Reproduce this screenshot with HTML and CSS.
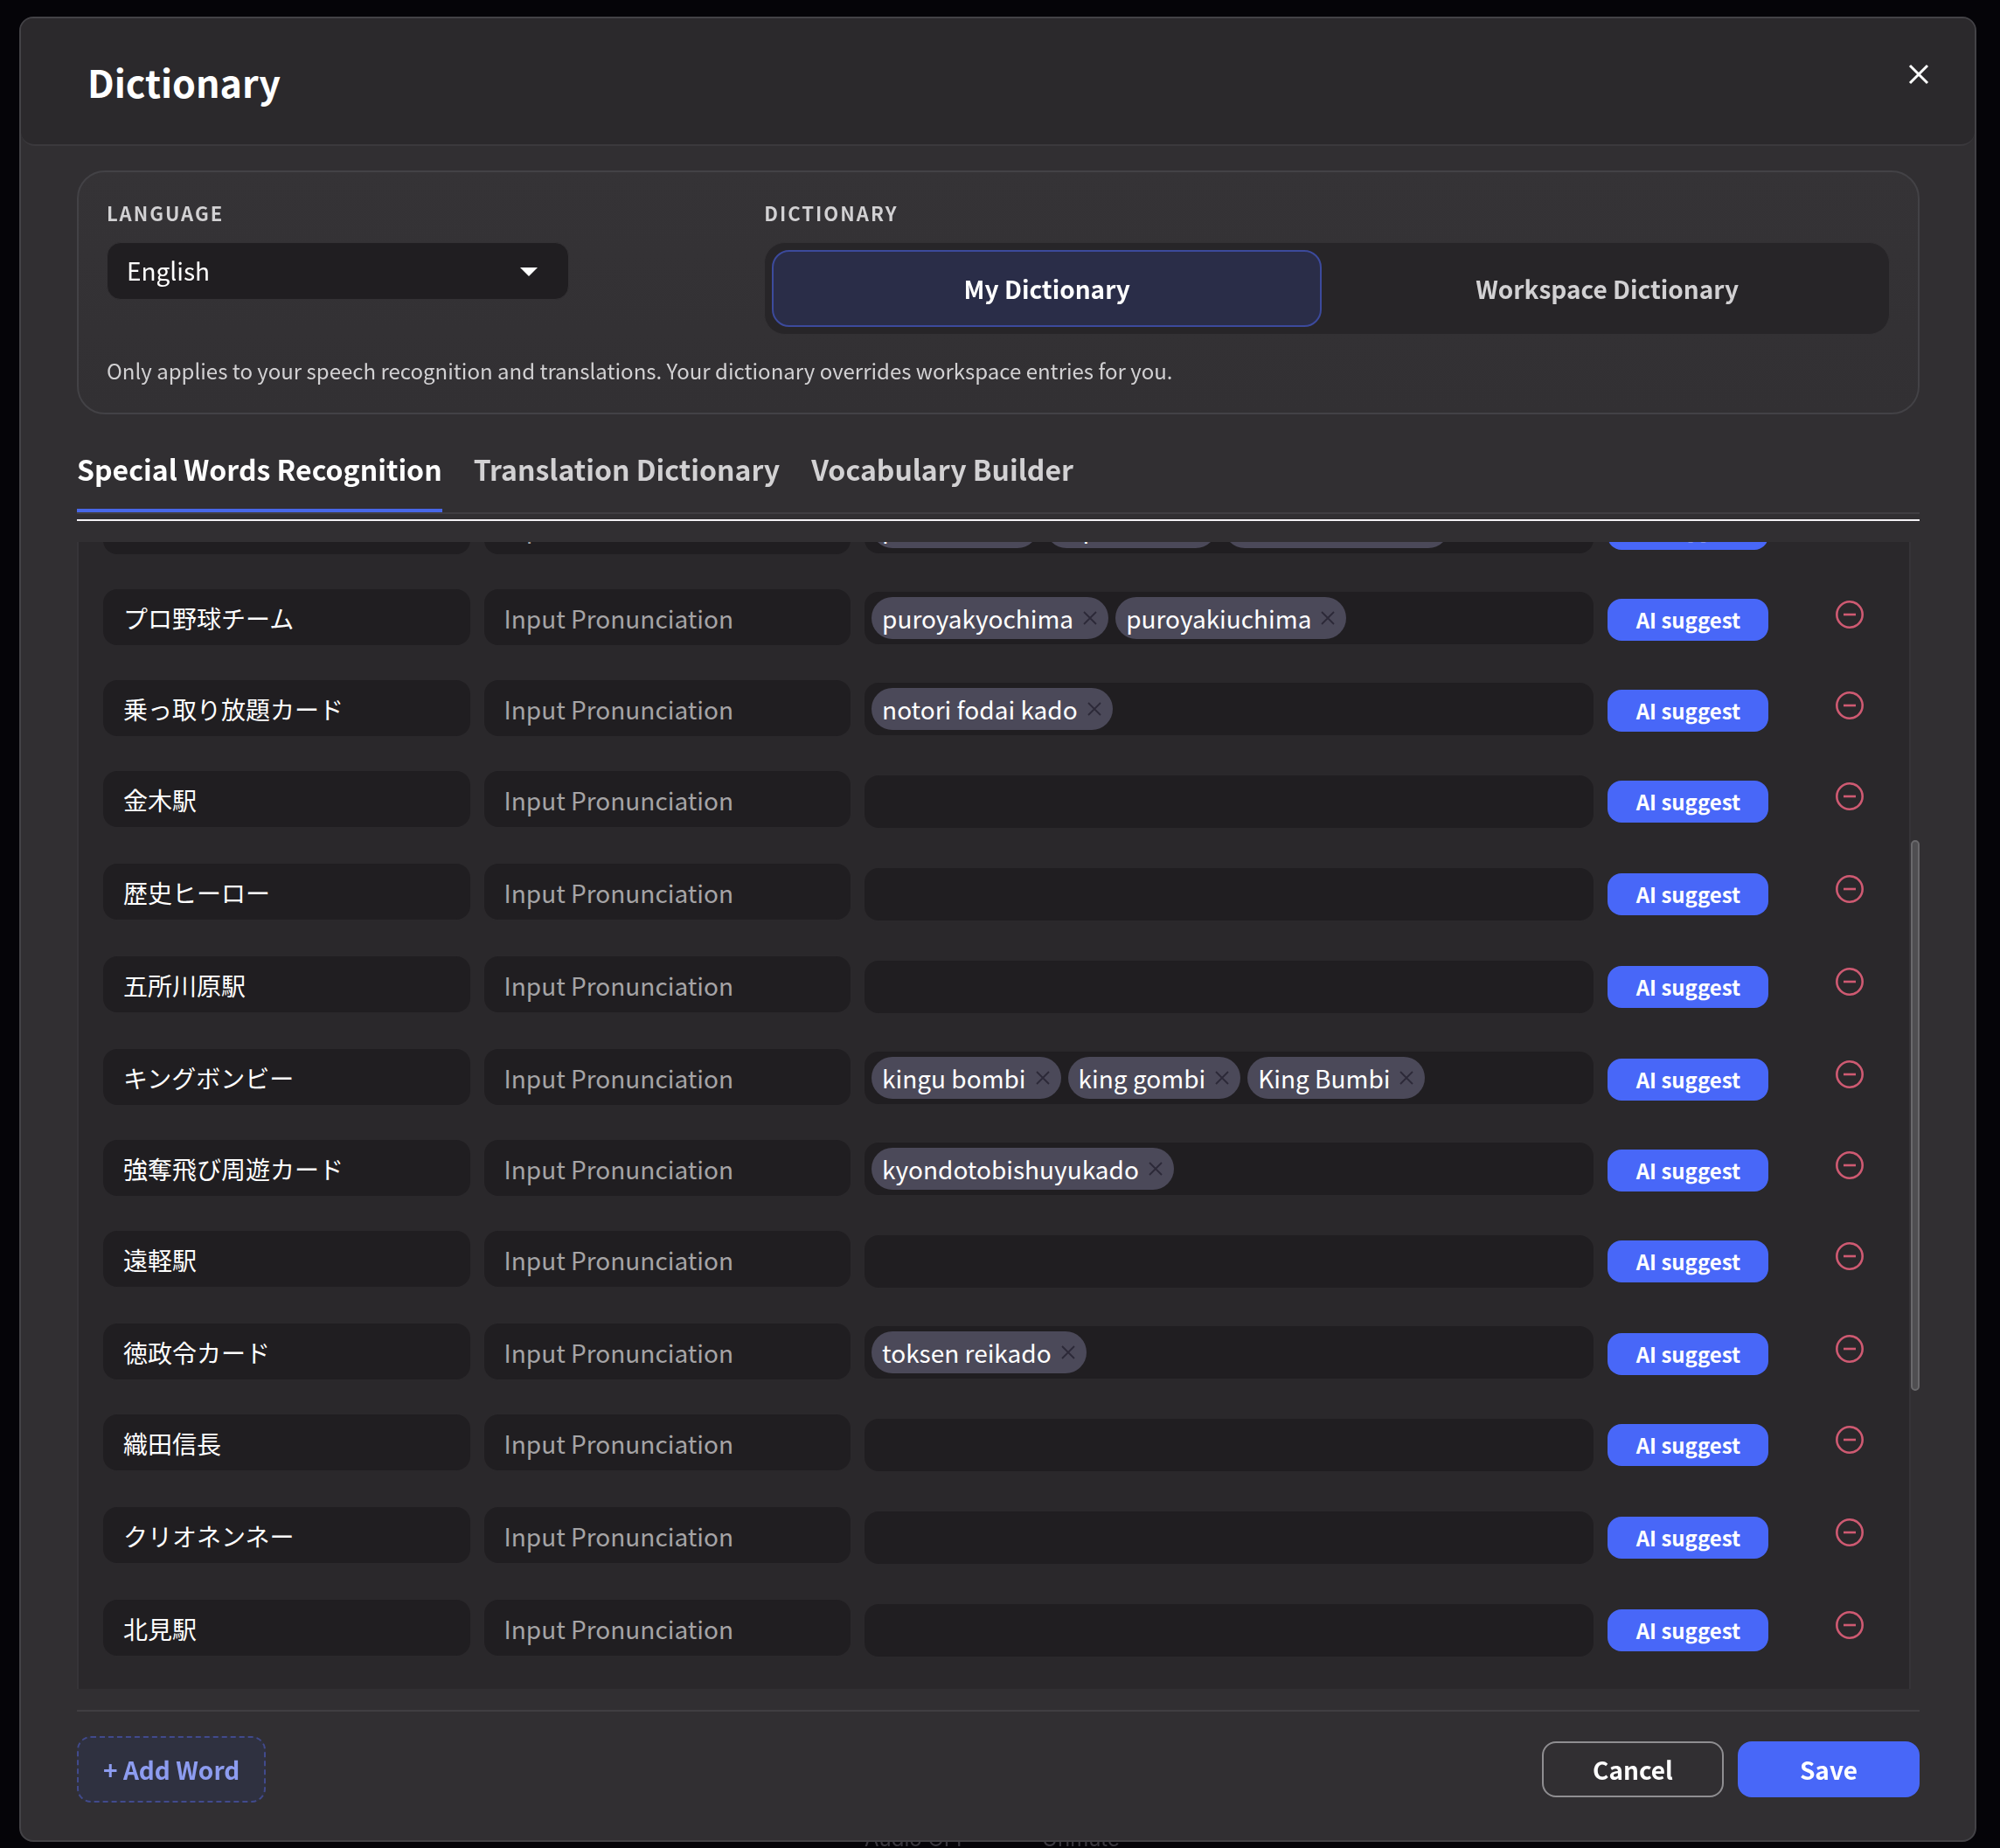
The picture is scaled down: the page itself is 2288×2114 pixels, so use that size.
FILE: index.html
```html
<!DOCTYPE html>
<html lang="en">
<head>
  <meta charset="UTF-8">
  <meta name="viewport" content="width=device-width, initial-scale=1">
  <title>Dictionary</title>
  <link rel="stylesheet" href="styles.css">
</head>
<body>
  <!-- call controls under the dialog -->
  <div class="call-bar">
    <span>Audio OFF</span>
    <span>Unmute</span>
  </div>

  <div class="dialog" role="dialog" aria-labelledby="dialogTitle">
    <header class="dialog-header">
      <h1 id="dialogTitle">Dictionary</h1>
      <button type="button" class="close-btn" aria-label="Close">
        <svg viewBox="0 0 24 24" width="24" height="24"><path d="M2 2L22 22M22 2L2 22" fill="none" stroke="#fff" stroke-width="3"/></svg>
      </button>
    </header>

    <div class="dialog-body">
      <section class="filters">
        <div class="filter-grid">
          <div class="field">
            <label class="field-label" for="language">Language</label>
            <div class="select-wrap">
              <select id="language">
                <option>English</option>
                <option>Japanese</option>
              </select>
              <span class="caret"></span>
            </div>
          </div>
          <div class="field">
            <span class="field-label">Dictionary</span>
            <div class="toggle">
              <button type="button" class="active">My Dictionary</button>
              <button type="button">Workspace Dictionary</button>
            </div>
          </div>
        </div>
        <p class="hint">Only applies to your speech recognition and translations. Your dictionary overrides workspace entries for you.</p>
      </section>

      <nav class="tabs">
        <button type="button" class="tab active">Special Words Recognition</button>
        <button type="button" class="tab">Translation Dictionary</button>
        <button type="button" class="tab">Vocabulary Builder</button>
      </nav>
      <hr class="divider">

      <div class="list-area">
        <div class="list" id="list">
          <table class="words">
            <colgroup>
              <col class="col-word">
              <col class="col-word">
              <col class="col-sounds">
              <col class="col-ai">
              <col>
            </colgroup>
            <tbody id="rows"></tbody>
          </table>
        </div>
        <div class="scroll-thumb"></div>
      </div>

      <footer class="dialog-footer">
        <button type="button" class="add-btn">+ Add Word</button>
        <div class="actions">
          <button type="button" class="btn btn-outline">Cancel</button>
          <button type="button" class="btn btn-primary">Save</button>
        </div>
      </footer>
    </div>
  </div>

  <script>
    const words = [
      { word: "", sounds: ["pinta kado", "supin kado", "hachinen kados"] },
      { word: "プロ野球チーム", sounds: ["puroyakyochima", "puroyakiuchima"] },
      { word: "乗っ取り放題カード", sounds: ["notori fodai kado"] },
      { word: "金木駅", sounds: [] },
      { word: "歴史ヒーロー", sounds: [] },
      { word: "五所川原駅", sounds: [] },
      { word: "キングボンビー", sounds: ["kingu bombi", "king gombi", "King Bumbi"] },
      { word: "強奪飛び周遊カード", sounds: ["kyondotobishuyukado"] },
      { word: "遠軽駅", sounds: [] },
      { word: "徳政令カード", sounds: ["toksen reikado"] },
      { word: "織田信長", sounds: [] },
      { word: "クリオネンネー", sounds: [] },
      { word: "北見駅", sounds: [] }
    ];

    const chip = (text) => `
      <span class="chip">${text}<button type="button" aria-label="Remove ${text}">
        <svg viewBox="0 0 16 16" width="16" height="16"><path d="M1 1L15 15M15 1L1 15" fill="none" stroke="#2c2938" stroke-width="1.8"/></svg>
      </button></span>`;

    document.getElementById("rows").innerHTML = words.map((w) => `
      <tr class="${w.sounds.length ? "" : "empty"}">
        <td><input type="text" aria-label="Word" value="${w.word}"></td>
        <td><input type="text" aria-label="Pronunciation" placeholder="Input Pronunciation"></td>
        <td><div class="chips">${w.sounds.map(chip).join("")}</div></td>
        <td><button type="button" class="ai-btn">AI suggest</button></td>
        <td class="remove-cell">
          <button type="button" class="remove-btn" aria-label="Remove word">
            <svg viewBox="0 0 32 32" width="32" height="32"><circle cx="16" cy="16" r="14.7" /><path d="M9 16H23"/></svg>
          </button>
        </td>
      </tr>`).join("");

    const list = document.getElementById("list");
    list.scrollTop = list.scrollHeight;
  </script>
</body>
</html>
```

FILE: styles.css
```css
* {
  box-sizing: border-box;
}

body {
  margin: 0;
  height: 100vh;
  padding: 19px 27px 7px 22px;
  overflow: hidden;
  background: #050408;
  color: #fff;
  font-family: "Noto Sans CJK JP", "Noto Sans", sans-serif;
  font-size: 28px;
}

button, input, select {
  font: inherit;
  color: inherit;
  margin: 0;
}

button {
  border: none;
  background: none;
  padding: 0;
  cursor: pointer;
}

svg {
  display: block;
}

.call-bar {
  position: fixed;
  left: 0;
  right: 0;
  bottom: 0;
  display: flex;
  justify-content: center;
  gap: 84px;
  padding-right: 18px;
  font-family: Inter, sans-serif;
  font-size: 24px;
  line-height: 20px;
  color: #3a383f;
}

.dialog {
  position: relative;
  height: 100%;
  display: flex;
  flex-direction: column;
  background: #312f32;
  border: 2px solid #434246;
  border-radius: 16px;
}

.dialog-header {
  display: flex;
  justify-content: space-between;
  align-items: flex-start;
  padding: 40px 52px 40px 76px;
  background: #2b292c;
  border-bottom: 2px solid #3b393d;
  border-radius: 14px 14px 16px 16px;
}

h1 {
  margin: 0;
  font-size: 43px;
  font-weight: 600;
  line-height: 64px;
}

.close-btn {
  margin-top: 12px;
}

.dialog-body {
  flex: 1;
  min-height: 0;
  display: flex;
  flex-direction: column;
  padding: 28px 63px 43px 64px;
}

.filters {
  padding: 32px;
  background: linear-gradient(#353336, #323033);
  border: 2px solid #434246;
  border-radius: 32px;
}

.filter-grid {
  display: grid;
  grid-template-columns: 9fr 16fr;
  gap: 28px;
}

.field-label {
  display: block;
  margin-bottom: 20px;
  font-size: 22px;
  font-weight: 600;
  line-height: 28px;
  letter-spacing: 2px;
  text-transform: uppercase;
  color: #d2d1d3;
}

.select-wrap {
  position: relative;
  width: 73%;
}

select {
  display: block;
  width: 100%;
  height: 66px;
  padding: 0 22px 2px;
  appearance: none;
  border: 1px solid #333134;
  border-radius: 16px;
  background: #201e21;
}

.caret {
  position: absolute;
  top: 29px;
  right: 36px;
  border: 10px solid transparent;
  border-top-color: #fff;
  border-bottom: none;
  pointer-events: none;
}

.toggle {
  display: flex;
  gap: 12px;
  padding: 8px;
  border: 1px solid #333134;
  border-radius: 24px;
  background: #272528;
}

.toggle button {
  flex: 1;
  height: 88px;
  border: 2px solid transparent;
  border-radius: 20px;
  font-weight: 600;
  color: #d2d1d3;
}

.toggle .active {
  background: #2a2d48;
  border-color: #3c4a9c;
  color: #fff;
}

.hint {
  margin: 24px 0 0;
  font-size: 24px;
  line-height: 33px;
  color: #d2d1d3;
}

.tabs {
  display: flex;
  gap: 36px;
  margin-top: 36px;
  border-bottom: 2px solid #403e42;
}

.tab {
  padding: 4px 0 24px;
  border-bottom: 4px solid transparent;
  font-size: 32px;
  font-weight: 600;
  line-height: 44px;
  color: #d2d1d3;
}

.tab.active {
  border-bottom-color: #4867e8;
  color: #fff;
}

.divider {
  width: 100%;
  height: 2px;
  margin: 6px 0 24px;
  border: none;
  background: #f4f2f6;
}

.list-area {
  position: relative;
  flex: 1;
  min-height: 0;
}

.list {
  height: 100%;
  margin-right: 10px;
  padding: 0 0 16px 20px;
  overflow-y: scroll;
  scrollbar-width: none;
  background: #2a282b;
  border: solid #363438;
  border-width: 0 2px;
}

.scroll-thumb {
  position: absolute;
  top: 26%;
  right: 0;
  width: 10px;
  height: 48%;
  border: 2px solid #6a696c;
  border-radius: 5px;
  background: #4f4e51;
}

.words {
  width: 100%;
  table-layout: fixed;
  border-collapse: collapse;
}

.col-word {
  width: 21%;
}

.col-sounds {
  width: 41%;
}

.col-ai {
  width: 200px;
}

.words tr {
  height: 104px;
}

.words tr.empty {
  height: 106px;
}

.words td {
  padding: 20px 8px 0;
  vertical-align: top;
}

.words input {
  display: block;
  width: 100%;
  height: 64px;
  padding: 2px 23px 0;
  border: none;
  border-radius: 16px;
  background: #201e21;
}

.words input::placeholder {
  color: #a5a4a6;
  opacity: 1;
}

.chips {
  display: flex;
  gap: 8px;
  height: 60px;
  margin-top: 3px;
  padding: 6px 8px;
  border-radius: 16px;
  background: #201e21;
}

.empty .chips {
  margin-top: 5px;
}

.chip {
  display: flex;
  align-items: center;
  gap: 11px;
  padding: 0 13px 0 12px;
  border-radius: 24px;
  background: #4b4959;
  line-height: 48px;
  white-space: nowrap;
}

.ai-btn {
  width: 100%;
  height: 48px;
  margin-top: 11px;
  border-radius: 16px;
  background: #4867f8;
  font-size: 24px;
  font-weight: 600;
  line-height: 48px;
}

.words .remove-cell {
  padding-left: 69px;
}

.remove-btn {
  display: block;
  margin-top: 13px;
}

.remove-btn svg {
  fill: none;
  stroke: #cf5a72;
  stroke-width: 2.6;
}

.dialog-footer {
  display: flex;
  justify-content: space-between;
  align-items: center;
  margin-top: 24px;
  padding-top: 28px;
  border-top: 2px solid #403e42;
}

.add-btn {
  height: 76px;
  padding: 0 28px;
  border: 2px dashed #414a8c;
  border-radius: 16px;
  background: #2f3140;
  font-weight: 600;
  color: #8d9cf0;
}

.actions {
  display: flex;
  gap: 16px;
}

.btn {
  width: 208px;
  height: 64px;
  border-radius: 16px;
  font-weight: 600;
}

.btn-outline {
  border: 2px solid #8f8e91;
}

.btn-primary {
  background: #4867f8;
}
```
